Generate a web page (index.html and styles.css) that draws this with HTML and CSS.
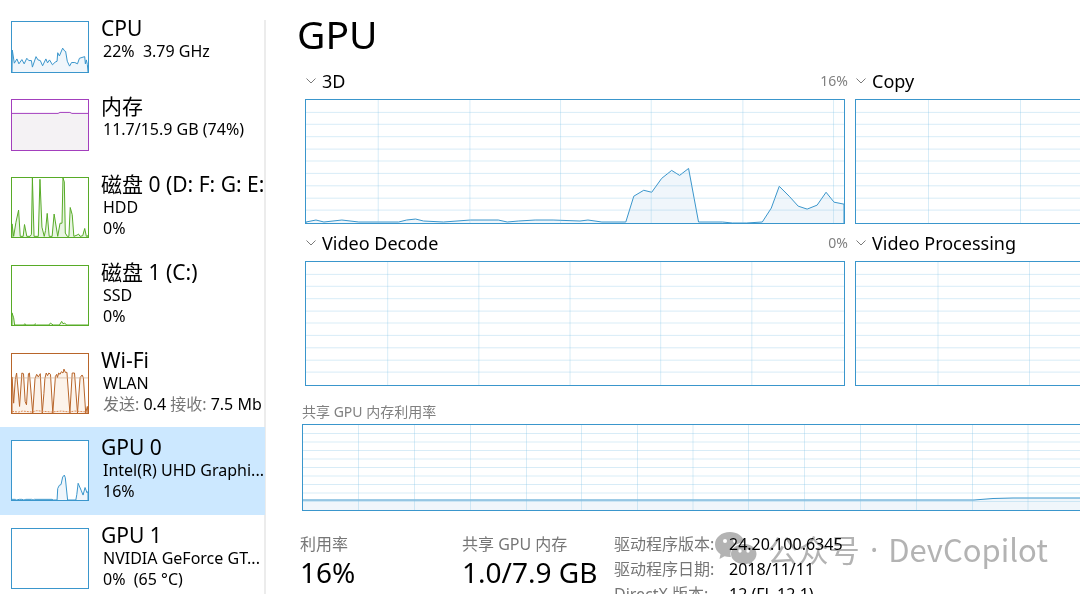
FILE: index.html
```
<!DOCTYPE html>
<html lang="zh-CN">
  <head>
    <meta charset="UTF-8" />
    <meta name="viewport" content="width=device-width, initial-scale=1.0" />
    <title>GPU</title>
    <link rel="stylesheet" href="styles.css">
  </head>
  <body>
    <div class="app">
      <nav class="sidebar">
        <button class="item short cpu">
          <svg class="thumb" viewBox="0 0 231 153" preserveAspectRatio="none">
            <path class="area" d="M0 153L1 86L7 126L15 113L21 128L30 115L37 128L45 111L51 118L59 118L62 138L73 106L79 116L86 118L93 134L103 113L108 125L114 116L123 131L131 123L137 120L139 94L144 104L154 80L161 90L163 90L168 120L175 135L181 124L191 124L199 128L205 111L221 106L223 128L226 116L229 130L231 153" />
          </svg>
          <span class="info">
            <span class="title">CPU</span>
            <span class="sub">22%&nbsp; 3.79 GHz</span>
          </span>
        </button>
        <button class="item short memory">
          <svg class="thumb" viewBox="0 0 231 153" preserveAspectRatio="none">
            <path class="area" d="M-3 156V41H140L146 38H176L182 41H234V156" />
          </svg>
          <span class="info">
            <span class="title">内存</span>
            <span class="sub">11.7/15.9 GB (74%)</span>
          </span>
        </button>
        <button class="item disk">
          <svg class="thumb" viewBox="0 0 231 180" preserveAspectRatio="none">
            <path class="area" d="M0 180V140L5 178L12 135L20 98L25 178H34L38 142L45 178H55L59 172L62 0L67 178H80L85 4L91 150L98 178L102 160L107 108L113 178H122L128 110L139 178L146 138H152L155 0L159 12L162 168L168 178H173L177 90L183 112L188 178L198 174L202 171L207 178L215 176L221 154L226 178L231 176V180" />
          </svg>
          <span class="info">
            <span class="title">磁盘 0 (D: F: G: E:</span>
            <span class="sub">HDD</span>
            <span class="sub">0%</span>
          </span>
        </button>
        <button class="item disk">
          <svg class="thumb" viewBox="0 0 231 180" preserveAspectRatio="none">
            <path class="area" d="M0 180V143L5 158L8 180H36L39 176L43 180H66L70 176L74 180H112L117 174L121 177L125 180H144L151 169L155 176L160 174L166 180H231" />
          </svg>
          <span class="info">
            <span class="title">磁盘 1 (C:)</span>
            <span class="sub">SSD</span>
            <span class="sub">0%</span>
          </span>
        </button>
        <button class="item wifi">
          <svg class="thumb" viewBox="0 0 231 180" preserveAspectRatio="none">
            <path class="area" d="M0 180V70L5 150L10 78L14 58L23 160L30 58L35 60L40 145L44 155L50 60L53 58L63 180L70 75L75 62L80 70L86 60L92 180L97 120L100 75L104 58L108 66L112 58L117 62L124 180L132 68L136 62L138 72L142 58L146 62L150 54L155 58L158 46L162 56L167 56L176 180L183 58L190 58L199 180L207 72L213 64L217 72L224 180L229 160L231 180" />
            <path class="faint" d="M0 73H231" />
            <path class="sent" d="M0 175L20 177L32 174L60 177L75 173L120 177L150 174L175 177L190 174L231 177" />
          </svg>
          <span class="info">
            <span class="title">Wi-Fi</span>
            <span class="sub">WLAN</span>
            <span class="sub"><i>发送:</i> 0.4 <i>接收:</i> 7.5 Mb</span>
          </span>
        </button>
        <button class="item gpu active">
          <svg class="thumb" viewBox="0 0 231 180" preserveAspectRatio="none">
            <path class="area" d="M0 178H10L14 180L22 178H30L36 180L42 178H60L64 180L68 178H122L126 180H137L139 145L144 135L149 133L154 110L159 104L162 112L169 180H194L197 163L201 129L210 150L216 165L222 142L228 158L231 154V180" />
          </svg>
          <span class="info">
            <span class="title">GPU 0</span>
            <span class="sub">Intel(R) UHD Graphi...</span>
            <span class="sub">16%</span>
          </span>
        </button>
        <button class="item gpu">
          <svg class="thumb" viewBox="0 0 231 180" preserveAspectRatio="none"></svg>
          <span class="info">
            <span class="title">GPU 1</span>
            <span class="sub">NVIDIA GeForce GT...</span>
            <span class="sub">0%&nbsp; (65 °C)</span>
          </span>
        </button>
      </nav>

      <main>
        <h1>GPU</h1>

        <div class="engines">
          <section>
            <header>
              <button class="engine"><svg class="chevron" viewBox="0 0 10 6"><path d="M0.5 0.5L5 5L9.5 0.5" /></svg>3D</button>
              <span class="percent">16%</span>
            </header>
            <svg class="chart" viewBox="0 0 540 124" preserveAspectRatio="none">
              <path class="area" d="M0 124V123L10 121L18 123L36 121L53 123H93L101 121L110 120L118 122L138 123L165 121H193L202 123L213 122L230 121H248L275 122L283 121L297 123H321L329 97L339 91L347 93L357 79L367 71L375 76L384 69L394 123H418L428 124H442L458 123L467 109L475 87L485 97L494 107L503 110L513 106L522 93L530 103L540 105V124" />
              <path class="grid" d="M0 12.5H540M0 24.5H540M0 37H540M0 49.5H540M0 61.5H540M0 74H540M0 86.5H540M0 99H540M0 111H540M72.5 0V124M164.5 0V124M255.5 0V124M346.5 0V124M438.5 0V124M529.5 0V124" />
            </svg>
          </section>
          <section>
            <header>
              <button class="engine"><svg class="chevron" viewBox="0 0 10 6"><path d="M0.5 0.5L5 5L9.5 0.5" /></svg>Copy</button>
            </header>
            <svg class="chart cut" viewBox="0 0 224 124" preserveAspectRatio="none">
              <path class="grid" d="M0 12.5H224M0 24.5H224M0 37H224M0 49.5H224M0 61.5H224M0 74H224M0 86.5H224M0 99H224M0 111H224M72.5 0V124M164.5 0V124" />
            </svg>
          </section>
          <section>
            <header>
              <button class="engine"><svg class="chevron" viewBox="0 0 10 6"><path d="M0.5 0.5L5 5L9.5 0.5" /></svg>Video Decode</button>
              <span class="percent">0%</span>
            </header>
            <svg class="chart" viewBox="0 0 540 124" preserveAspectRatio="none">
              <path class="grid" d="M0 12.5H540M0 24.5H540M0 37H540M0 49.5H540M0 61.5H540M0 74H540M0 86.5H540M0 99H540M0 111H540M82 0V124M173.5 0V124M265 0V124M356 0V124M447.5 0V124" />
            </svg>
          </section>
          <section>
            <header>
              <button class="engine"><svg class="chevron" viewBox="0 0 10 6"><path d="M0.5 0.5L5 5L9.5 0.5" /></svg>Video Processing</button>
            </header>
            <svg class="chart cut" viewBox="0 0 224 124" preserveAspectRatio="none">
              <path class="grid" d="M0 12.5H224M0 24.5H224M0 37H224M0 49.5H224M0 61.5H224M0 74H224M0 86.5H224M0 99H224M0 111H224M82 0V124M173.5 0V124" />
            </svg>
          </section>
        </div>

        <section class="shared">
          <h2>共享 GPU 内存利用率</h2>
          <svg class="chart cut" viewBox="0 0 777 85" preserveAspectRatio="none">
            <path class="area" d="M-2 87V75H671L690 73.5L710 73H780V87" />
            <path class="grid" d="M0 8.5H777M0 17H777M0 25.5H777M0 34H777M0 42.5H777M0 51H777M0 59.5H777M0 68H777M0 76.5H777M55.5 0V85M111.5 0V85M167.5 0V85M223.5 0V85M278.5 0V85M334.5 0V85M390 0V85M445.5 0V85M501.5 0V85M557.5 0V85M613.5 0V85M669.5 0V85M725 0V85" />
          </svg>
        </section>

        <div class="stats">
          <dl class="stat">
            <dt>利用率</dt>
            <dd>16%</dd>
          </dl>
          <dl class="stat">
            <dt>共享 GPU 内存</dt>
            <dd>1.0/7.9 GB</dd>
          </dl>
          <dl class="driver">
            <dt>驱动程序版本:</dt>
            <dd>24.20.100.6345</dd>
            <dt>驱动程序日期:</dt>
            <dd>2018/11/11</dd>
            <dt>DirectX 版本:</dt>
            <dd>12 (FL 12.1)</dd>
          </dl>
        </div>

        <div class="watermark">
          <svg viewBox="0 0 42 34">
            <path d="M15 0C6.5 0 0 5.5 0 12.5c0 4 2 7.3 5.5 9.7L4.5 27l5-2.7c2 .6 4 .8 6.3.7C14 17 20 10.5 29.5 10.5 28 4 22 0 15 0z" />
            <path d="M29 12C21.5 12 16 16.5 16 22s5.5 10 13 10c1.6 0 3-.2 4.500-.6L38 34l-1-4c2.800-2 4.500-4.700 4.500-8 0-5.500-5-10-12.500-10z" />
            <circle cx="10" cy="9" r="2" />
            <circle cx="20" cy="9" r="2" />
            <circle cx="25" cy="19" r="1.7" />
            <circle cx="33" cy="19" r="1.7" />
          </svg>
          <span>公众号</span>
          <span class="dot">·</span>
          <span>DevCopilot</span>
        </div>
      </main>
    </div>
  </body>
</html>
```
FILE: styles.css
```
* {
  box-sizing: border-box;
}

body {
  margin: 0;
  background-color: #fff;
  color: #000;
  font-family: "Noto Sans", "Noto Sans CJK SC", sans-serif;
  font-size: 16px;
}

button {
  border: 0;
  padding: 0;
  background: none;
  color: inherit;
  font: inherit;
  text-align: left;
  cursor: pointer;
}

svg {
  display: block;
}

.app {
  display: flex;
  height: 100vh;
  overflow: hidden;
}

/* sidebar */

.sidebar {
  flex: none;
  width: 266px;
  padding-top: 7px;
  background: linear-gradient(#ececec, #ececec) right 20px / 2px 100% no-repeat;
}

.item {
  display: flex;
  gap: 12px;
  width: 265px;
  height: 88px;
  padding: 14px 0 0 11px;
  overflow: hidden;
}

.item.short {
  height: 78px;
}

.item.gpu {
  padding-top: 13px;
}

.active {
  background-color: #cce8ff;
}

.thumb {
  flex: none;
  width: 78px;
  height: 61px;
  border: 1px solid var(--line);
  background-color: #fff;
}

.short .thumb {
  height: 52px;
}

.info {
  display: block;
  margin-top: -4px;
  white-space: nowrap;
}

.title,
.sub {
  display: block;
  height: 21px;
  line-height: 21px;
}

.title {
  height: 24px;
  font-size: 21px;
  line-height: 23px;
}

.sub {
  padding-left: 2px;
  font-size: 16px;
}

.sub i {
  color: #767676;
  font-style: normal;
}

.cpu,
.gpu,
main {
  --line: #3a96cc;
  --fill: #f0f6fb;
}

.memory {
  --line: #a33fbd;
  --fill: #f4f2f4;
}

.disk {
  --line: #57ab27;
  --fill: #e9f5e3;
}

.wifi {
  --line: #b8652a;
  --fill: #fcf3eb;
}

.area {
  fill: var(--fill);
  stroke: var(--line);
  vector-effect: non-scaling-stroke;
}

.faint {
  stroke: #cfae94;
  stroke-width: 3;
  stroke-opacity: 0.7;
}

.sent {
  fill: none;
  stroke: #dc8d5a;
  stroke-dasharray: 2 1;
  vector-effect: non-scaling-stroke;
}

/* details */

main {
  position: relative;
  flex: 1;
  min-width: 0;
}

h1 {
  margin: 6px 0 0 31px;
  font-size: 39px;
  font-weight: 400;
  line-height: 56px;
}

.engines {
  display: grid;
  grid-template-columns: 12fr 5fr;
  column-gap: 10px;
  padding-left: 39px;
}

header {
  display: flex;
  align-items: center;
  justify-content: space-between;
  height: 37px;
}

.engine {
  display: flex;
  align-items: center;
  gap: 6px;
  padding-left: 1px;
  font-size: 18px;
  line-height: 24px;
  white-space: nowrap;
}

.chevron {
  width: 10px;
  height: 6px;
  fill: none;
  stroke: #7a7a7a;
}

.percent {
  margin-right: -3px;
  color: #808080;
  font-size: 14px;
}

.chart {
  width: 100%;
  height: 125px;
  border: 1px solid var(--line);
}

.chart.cut {
  border-right: 0;
}

.grid {
  fill: none;
  stroke: #7fbfe5;
  stroke-opacity: 0.3;
  vector-effect: non-scaling-stroke;
}

.shared {
  padding-left: 36px;
}

.shared .chart {
  height: 87px;
}

h2 {
  margin: 0;
  padding-top: 13px;
  color: #808080;
  font-size: 14px;
  font-weight: 400;
  line-height: 25px;
}

.stats {
  display: flex;
  padding: 21px 0 0 34px;
}

dl,
dd {
  margin: 0;
}

dt {
  color: #767676;
}

.stat {
  width: 162px;
  line-height: 25px;
  white-space: nowrap;
}

.stat + .stat {
  width: 152px;
}

.stat dd {
  font-size: 28px;
  line-height: 30px;
}

.driver {
  display: grid;
  grid-template-columns: 115px auto;
  line-height: 25px;
  white-space: nowrap;
}

/* account mark laid over the driver details */

.watermark {
  position: absolute;
  right: 32px;
  bottom: 24px;
  display: flex;
  align-items: center;
  gap: 10px;
  color: #b3b3b3;
  font-family: "Noto Sans CJK SC", sans-serif;
  font-size: 31px;
  line-height: 42px;
  white-space: nowrap;
  mix-blend-mode: multiply;
}

.watermark svg {
  width: 42px;
  height: 34px;
  fill: #b3b3b3;
}

.watermark circle {
  fill: #fff;
}

.dot {
  font-family: "Noto Sans", sans-serif;
}
```
